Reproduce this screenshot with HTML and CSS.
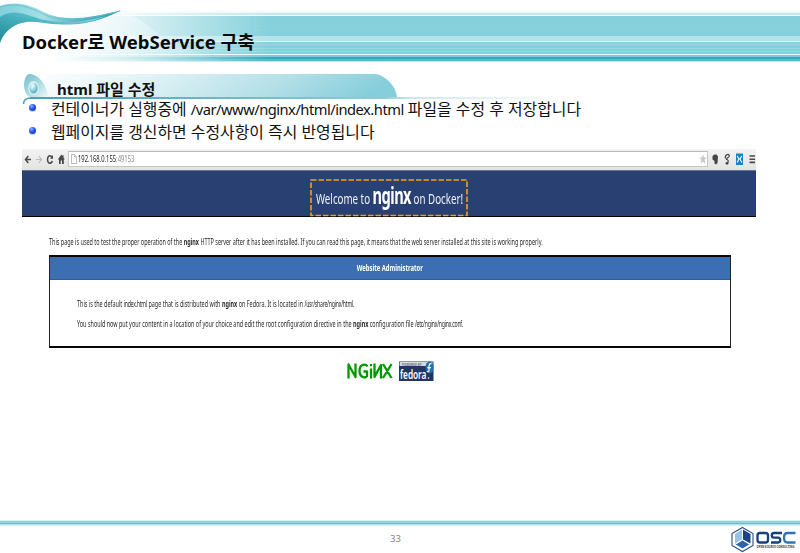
FILE: index.html
```
<!DOCTYPE html>
<html lang="ko">
<head>
<meta charset="utf-8">
<title>Docker로 WebService 구축</title>
<link rel="stylesheet" href="styles.css">
</head>
<body>
<main class="slide">
  <header class="masthead">
    <svg class="masthead-art" width="800" height="72" viewBox="0 0 800 72" aria-hidden="true">
      <defs>
        <linearGradient id="fade" gradientUnits="userSpaceOnUse" x1="50" y1="0" x2="270" y2="0"><stop offset="0" stop-color="#000"/><stop offset=".35" stop-color="#444"/><stop offset="1" stop-color="#fff"/></linearGradient>
        <mask id="m"><rect width="800" height="72" fill="url(#fade)"/></mask>
        <linearGradient id="wave" x1="0" y1="0" x2="1" y2="0"><stop offset="0" stop-color="#7fd0da"/><stop offset=".35" stop-color="#a5dfe6"/><stop offset=".65" stop-color="#4fb3c2"/><stop offset="1" stop-color="#2c9cad"/></linearGradient>
        <linearGradient id="wave2" x1="0" y1="1" x2="1" y2="0"><stop offset="0" stop-color="#1f8796"/><stop offset=".5" stop-color="#47b1bf"/><stop offset="1" stop-color="#a9e0e7"/></linearGradient>
        <linearGradient id="glow" x1="0" y1="0" x2="1" y2="1"><stop offset="0" stop-color="#fff" stop-opacity=".5"/><stop offset="1" stop-color="#fff" stop-opacity="0"/></linearGradient>
      </defs>
      <g mask="url(#m)">
        <rect y="11" width="800" height="2" fill="#edf8fa"/>
        <rect y="13" width="800" height="2" fill="#c3e8ed"/>
        <rect y="15" width="800" height="1" fill="#f4fcfc"/>
        <rect y="16" width="800" height="20" fill="#86d0dc"/>
        <path d="M0 20.500H800M0 25.500H800M0 30.500H800" stroke="#89d2dd"/>
        <rect y="36" width="800" height="5" fill="#b5e2e9"/>
        <rect y="41" width="800" height="1" fill="#def5f7"/>
        <rect y="42" width="800" height="12" fill="#84d0dc"/>
        <path d="M0 44.500H800M0 48.500H800M0 51.500H800" stroke="#96d8e1"/>
        <rect y="54" width="800" height="1" fill="#e8fafb"/>
        <rect y="55" width="800" height="2" fill="#75cbd7"/>
        <rect y="57" width="800" height="2" fill="#36a9b9"/>
        <rect y="59" width="800" height="2" fill="#4ebdcd"/>
        <rect y="61" width="800" height="1" fill="#b9e6ec"/>
      </g>
      <path d="M122 12C150 20 158 42 190 51C205 56 220 58 230 62L60 62L60 20Z" fill="url(#glow)"/>
      <path d="M0 6C18 0 32 6 44 12C62 21 84 20 122 10C100 21 82 26 60 24C40 22 29 20 18 24C8 28 2 36 0 43Z" fill="url(#wave)"/>
      <path d="M0 17C14 8 26 15 40 19C58 24 82 23 106 16C84 25 66 25 52 24C38 22 29 20 18 24C8 28 2 36 0 43Z" fill="url(#wave2)"/>
      <path d="M0 7C18 2 31 8 43 14C62 23 86 20 120 11" fill="none" stroke="#65c0cc" stroke-width=".8"/>
    </svg>
    <h1>Docker로 WebService 구축</h1>
  </header>

  <section class="topic">
    <div class="topic-head">
      <svg class="topic-art" width="540" height="34" viewBox="0 0 540 34" aria-hidden="true">
        <defs>
          <linearGradient id="tab" x1="0" y1="0" x2="1" y2=".1"><stop offset="0" stop-color="#fff"/><stop offset=".35" stop-color="#dff2f5"/><stop offset=".7" stop-color="#b6e0e8"/><stop offset="1" stop-color="#86cedb"/></linearGradient>
          <linearGradient id="rule" gradientUnits="userSpaceOnUse" x1="24" y1="0" x2="540" y2="0"><stop offset="0" stop-color="#45a3b2"/><stop offset=".3" stop-color="#62b5c3"/><stop offset=".7" stop-color="#8fcdd8"/><stop offset=".75" stop-color="#cbe8ed"/><stop offset="1" stop-color="#f4fafb"/></linearGradient>
          <linearGradient id="leaf" x1="0" y1="0" x2="1" y2="1"><stop offset="0" stop-color="#72bdcb"/><stop offset=".5" stop-color="#a9dae2"/><stop offset="1" stop-color="#eef8fa"/></linearGradient>
          <radialGradient id="orb" cx=".38" cy=".3" r=".7"><stop offset="0" stop-color="#f4fdff"/><stop offset=".45" stop-color="#a9dfea"/><stop offset="1" stop-color="#4caabd"/></radialGradient>
        </defs>
        <path d="M30 1H376C386 3 396 13 397 24H30Z" fill="url(#tab)"/>
        <path d="M29 1C38 1 47 11 48 24H29C24 20 23 12 25 6C26 3 27 2 29 1Z" fill="url(#leaf)"/>
        <rect x="30" y="24" width="510" height="2" fill="url(#rule)"/>
        <path d="M23.500 31C23.500 27 26 25 31 25" fill="none" stroke="#45a3b2" stroke-width="1.500"/>
        <ellipse cx="33.500" cy="15" rx="5.200" ry="6.800" fill="#e8f7fa"/>
        <ellipse cx="33.500" cy="15" rx="4.200" ry="5.600" fill="url(#orb)"/>
      </svg>
      <h2>html 파일 수정</h2>
    </div>
    <ul class="points">
      <li>컨테이너가 실행중에 <span class="path">/var/www/nginx/html/index.html</span> 파일을 수정 후 저장합니다</li>
      <li>웹페이지를 갱신하면 수정사항이 즉시 반영됩니다</li>
    </ul>
  </section>

  <section class="browser">
    <div class="toolbar">
      <svg width="46" height="21" viewBox="0 0 46 21" fill="none" stroke="#484848" stroke-width="1.500">
        <path d="M9 10.500H4M6.300 7L3.500 10.500L6.300 14"/>
        <path d="M14 10.500H19M16.800 7L19.500 10.500L16.800 14" stroke="#bbb" stroke-width="1.200"/>
        <path d="M30 8.500C29.500 7 28 6.500 27 7C25 8 25 13 27 14C28.500 14.500 30 13.500 30.300 12"/><path d="M28 9.800H31V6Z" fill="#484848" stroke="none"/>
        <path d="M39.300 5.500L35.800 10.500H37V15H38.700V11.500H40V15H41.800V10.500H42.800L41.500 8.500V6H40.500V7.200Z" fill="#484848" stroke="none"/>
      </svg>
      <div class="address">
        <svg width="9" height="14" viewBox="0 0 9 14"><path d="M2.500 2.500H5.500L7.500 5V11.500H2.500ZM5.500 2.500V5H7.500" fill="#fff" stroke="#aaa" stroke-width=".8"/></svg>
        <span class="url">192.168.0.155<span class="port">:49153</span></span>
        <svg class="star" width="8" height="14" viewBox="0 0 8 14"><path d="M4 2L5 5.500H7.700L5.600 7.700L6.400 11.800L4 9.500L1.600 11.800L2.400 7.700L.3 5.500H3Z" fill="#c8c8c8"/></svg>
      </div>
      <svg width="48" height="21" viewBox="0 0 48 21">
        <path d="M4.500 7L6.500 5.500H8.500L10 7.500L9.500 14L8 15.500L6.500 14.500V12L4.500 10.500Z" fill="#454545"/>
        <path d="M17.500 9.500C16.500 6 20.500 4 21.300 6.300C22 8.500 18.500 8.500 18.500 10.500C21.500 11 20 14 18.500 14.500" fill="none" stroke="#454545" stroke-width="1.200"/><circle cx="19" cy="14.300" r="1.400" fill="#454545"/>
        <rect x="28" y="4.500" width="7" height="11.500" fill="#1583c5"/><path d="M29.200 7L31 10L29.200 13.500M33.800 7L32 10L33.800 13.500M30.500 10H32.500" fill="none" stroke="#fff" stroke-width="1.100"/>
        <path d="M41.500 7H47M41.500 10.200H47M41.500 13.400H47" stroke="#484848" stroke-width="1.600"/>
      </svg>
    </div>

    <div class="banner">
      <div class="welcome">
        <svg class="dashes" width="158" height="38" viewBox="0 0 158 38"><rect x="1" y="1" width="156" height="35.500" fill="none" stroke="#f2a11c" stroke-width="1.600" stroke-dasharray="5.500 2"/></svg>
        <p>Welcome to <b>nginx</b> on Docker!</p>
      </div>
    </div>

    <div class="content">
      <p class="line intro">This page is used to test the proper operation of the <b>nginx</b> HTTP server after it has been installed. If you can read this page, it means that the web server installed at this site is working properly.</p>
      <div class="panel">
        <div class="panel-head"><p class="line admin">Website Administrator</p></div>
        <div class="panel-body">
          <p class="line">This is the default <code>index.html</code> page that is distributed with <b>nginx</b> on Fedora. It is located in <code>/usr/share/nginx/html.</code></p>
          <p class="line">You should now put your content in a location of your choice and edit the root configuration directive in the <b>nginx</b> configuration file <code>/etc/nginx/nginx.conf.</code></p>
        </div>
      </div>
      <div class="logos">
        <svg width="46" height="20" viewBox="0 0 46 20" role="img" aria-label="NGINX">
          <g fill="none" stroke="#090" stroke-width="2.300" stroke-linejoin="round">
            <path d="M1.500 17.500V3.500L8.500 16V2.500"/>
            <path d="M20.500 5.500C19 2.800 12.500 2.500 12.500 10C12.500 17.500 20 17 20 15V10.500H16.500"/>
            <path d="M24 7.500V17.500M24 3V5.200M27.500 2.500V16L34 4V17.500M36 3L44.500 17M44.500 3L36 17"/>
          </g>
        </svg>
        <svg width="35" height="20" viewBox="0 0 35 20">
          <rect width="34.500" height="19.500" y=".500" fill="#21375f"/>
          <rect x=".6" y="1" width="33" height="4" fill="#d5dae2"/>
          <text class="powered" transform="translate(3 4.500) scale(.85 1)">POWERED BY</text>
          <text class="fedora" transform="translate(1 17.500) scale(.66 1)">fedora</text>
          <circle cx="29.500" cy="17" r=".8" fill="#fff"/>
          <ellipse cx="30.500" cy="6.500" rx="4" ry="6" fill="#1d70b5"/>
          <path d="M32.500 3C30.500 2 30 4 30 6V9.500C30 11 29 11 28 10.300M28.300 6.700H32" fill="none" stroke="#fff" stroke-width="1.200"/>
        </svg>
      </div>
    </div>
  </section>

  <footer>
    <div class="footer-rule"></div>
    <div class="footer-row">
      <span class="page-number">33</span>
      <svg class="osc" width="69" height="27" viewBox="0 0 69 27">
        <path d="M11.500 1.500L22 7.500V19.500L11.500 25.500L1 19.500V7.500Z" fill="#fff" stroke="#2a4d83" stroke-width="1.100"/>
        <path d="M11 3.500V13.500L4 17.800V8Z" fill="#9ac2e4"/>
        <path d="M12 3.500L19.500 8V17.500L12 13.500Z" fill="#1d447e"/>
        <path d="M11.500 14.300L18.500 18.300L11.500 22.500L4.500 18.300Z" fill="#2b64a8"/>
        <path d="M11.500 3V14L20 19M11.500 14L3 19" fill="none" stroke="#fff" stroke-width="1"/>
        <g fill="none" stroke="#173f7b" stroke-width="2.300"><rect x="26.500" y="7" width="10.500" height="9.500" rx="2.500"/><path d="M51 7H43C40 7 40 11.700 43 11.700H47C50 11.700 50 16.500 47 16.500H40"/><path d="M64.500 7H56.500C54 7 53 8.500 53 11.700C53 15 54 16.500 56.500 16.500H64.500" stroke="#2f73b6"/></g>
        <text class="osc-sub" transform="translate(25.500 22) scale(.69 1)">OPEN SOURCE CONSULTING</text>
      </svg>
    </div>
  </footer>
</main>
</body>
</html>
```
FILE: styles.css
```
* { box-sizing: border-box; }

body {
  margin: 0;
  background: #fff;
  color: #111;
  font-family: "Noto Sans", "Noto Sans CJK KR", sans-serif;
  overflow: hidden;
}

svg { display: block; flex: none; }
p { margin: 0; }

.slide { height: 553px; display: flex; flex-direction: column; overflow: hidden; }

.masthead { position: relative; height: 73px; padding: 28px 0 0 22px; }
.masthead-art { position: absolute; left: 0; top: 0; }
h1 { position: relative; margin: 0; font-size: 18.5px; line-height: 27px; font-weight: 700; white-space: nowrap; color: #0a0a0a; }

.topic { height: 76px; }
.topic-head { position: relative; height: 26px; padding: 5px 0 0 57px; }
.topic-art { position: absolute; left: 0; top: 0; }
h2 { position: relative; margin: 0; font-size: 15px; line-height: 22px; font-weight: 700; white-space: nowrap; }

.points { position: relative; list-style: none; margin: 0; padding: 0 0 0 51px; font-size: 15.9px; }
.points li { position: relative; height: 23px; line-height: 21px; white-space: nowrap; }
.points li::before {
  content: "";
  position: absolute;
  left: -22px;
  top: 5px;
  width: 7px;
  height: 7px;
  border-radius: 50%;
  background: radial-gradient(circle at 35% 30%, #8db0ff 0, #2455e6 45%, #0b2fb8 100%);
  box-shadow: 0 1px 1px #c3cef1;
}
.path { font-size: 14.7px; letter-spacing: -0.5px; }

.browser { width: 734px; margin-left: 22px; height: 371px; }
.toolbar { display: flex; height: 21px; background: linear-gradient(#f3f3f3, #e3e3e3); }
.address { display: flex; width: 640px; height: 16px; margin-top: 2px; background: #fff; border: 1px solid #c6c6c6; border-top-color: #bbb; }
.url { width: 56px; font-size: 9.5px; line-height: 14px; color: #222; white-space: nowrap; transform: scaleX(0.615); transform-origin: 0 0; }
.port { color: #888; }
.star { margin-left: auto; }

.banner { height: 47px; padding: 8px 0 0 288px; background: #294172; border-top: 1px solid #62759a; border-bottom: 1px solid #050505; }
.welcome { position: relative; width: 158px; height: 38px; padding-left: 5.5px; }
.dashes { position: absolute; left: 0; top: 0; }
.welcome p { width: 228px; line-height: 34px; font-size: 15px; color: #f0f3f8; white-space: nowrap; transform: scaleX(0.65); transform-origin: 0 0; }
.welcome b { font-size: 22.5px; letter-spacing: -0.8px; color: #fff; }

.content { padding: 18px 26px 0 27px; }
.line { height: 14px; font-size: 9px; line-height: 13px; color: #2a2a2a; white-space: nowrap; transform: scaleX(0.606); transform-origin: 0 0; }
.line code { font-family: inherit; font-size: 8.5px; letter-spacing: -0.4px; }
.panel { margin-top: 6px; height: 93px; border: 1px solid #222; border-top: 2px solid #080808; border-bottom: 2px solid #080808; width: 682px; }
.panel-head { display: flex; justify-content: center; height: 23px; padding-top: 4px; background: #3c6eb4; border-bottom: 1px solid #315a99; }
.admin { color: #fff; font-weight: 700; transform: scaleX(0.65); transform-origin: 50% 0; }
.panel-body { display: flex; flex-direction: column; gap: 6px; padding: 17px 0 0 27px; }
.logos { display: flex; gap: 6px; margin: 13px 0 0 298px; }
.powered { font-size: 3.6px; font-weight: 700; fill: #6b7384; }
.fedora { font-size: 12.5px; font-weight: 600; fill: #fff; }

.footer-rule { height: 6px; background: linear-gradient(#d9f0f3 0 1px, #95d2dc 1px 3px, #6fbccb 3px 4px, #afe1e9 4px 5px, #d6f4f8 5px 6px); }
.footer-row { display: flex; justify-content: space-between; height: 27px; padding-left: 390px; }
.page-number { padding-top: 5px; font-size: 9.5px; line-height: 16px; color: #858585; }
.osc-sub { font-size: 4px; font-weight: 700; fill: #333; }
```
